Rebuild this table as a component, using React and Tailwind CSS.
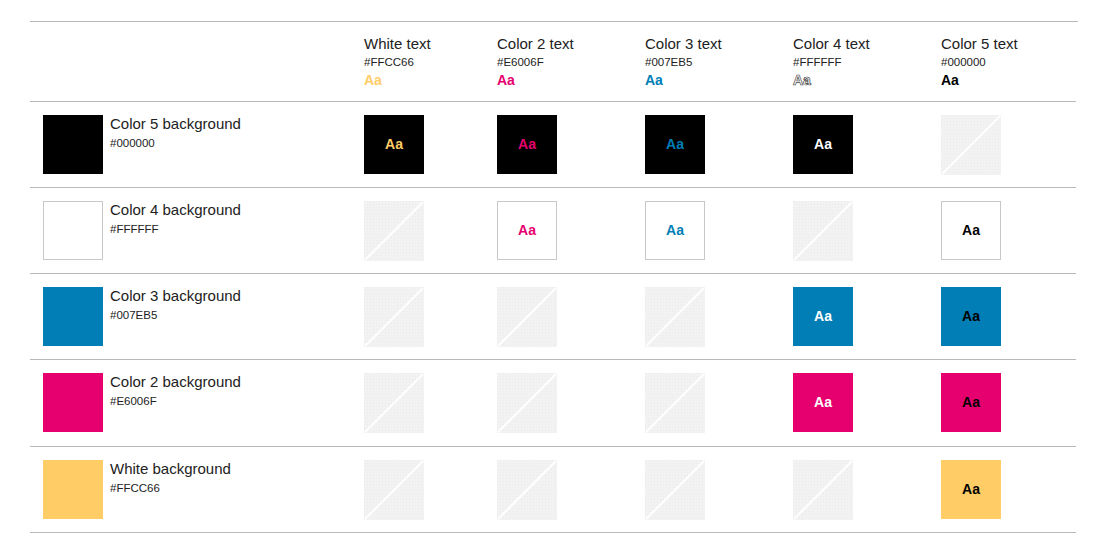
import React from "react";

const columns = [
    { name: "White text", hex: "#FFCC66", color: "text-[#FFCC66]" },
    { name: "Color 2 text", hex: "#E6006F", color: "text-[#E6006F]" },
    { name: "Color 3 text", hex: "#007EB5", color: "text-[#007EB5]" },
    { name: "Color 4 text", hex: "#FFFFFF", color: "text-white [-webkit-text-stroke:0.7px_#444]" },
    { name: "Color 5 text", hex: "#000000", color: "text-black" },
];

const cellText = [
    "text-[#FFCC66]",
    "text-[#E6006F]",
    "text-[#007EB5]",
    "text-white",
    "text-black",
];

// 0 = combination not allowed
const rows = [
    { name: "Color 5 background", hex: "#000000", bg: "bg-black", cells: [1, 1, 1, 1, 0] },
    { name: "Color 4 background", hex: "#FFFFFF", bg: "bg-white border border-[#c8c8c8]", cells: [0, 1, 1, 0, 1] },
    { name: "Color 3 background", hex: "#007EB5", bg: "bg-[#007EB5]", cells: [0, 0, 0, 1, 1] },
    { name: "Color 2 background", hex: "#E6006F", bg: "bg-[#E6006F]", cells: [0, 0, 0, 1, 1] },
    { name: "White background", hex: "#FFCC66", bg: "bg-[#FFCC66]", cells: [0, 0, 0, 0, 1] },
];

const Placeholder = () => (
    <svg width="60" height="60" viewBox="0 0 60 60" className="block">
        <defs>
            <pattern id="dots" width="3" height="3" patternUnits="userSpaceOnUse">
                <rect width="3" height="3" fill="#f2f2f2" />
                <rect width="1" height="1" fill="#ebebeb" />
            </pattern>
        </defs>
        <rect width="60" height="60" fill="url(#dots)" />
        <line x1="1" y1="59" x2="59" y2="1" stroke="#ffffff" strokeWidth="2" />
    </svg>
);

const App = () => {
    return (
        <div className="bg-white min-h-screen pt-[21px] px-[30px] text-[#222] font-['Liberation_Sans',Arial,sans-serif]">
            <div className="border-t border-[#b8b8b8] grid grid-cols-[334px_133px_148px_148px_148px_135px]">
                {/* Header */}
                <div className="h-[80px] border-b border-[#b8b8b8]" />
                {columns.map((c) => (
                    <div key={c.name} className="h-[80px] border-b border-[#b8b8b8] pt-[12px]">
                        <div className="text-[15px] leading-[20px]">{c.name}</div>
                        <div className="text-[11.5px] leading-[16px]">{c.hex}</div>
                        <div className={`text-[14px] leading-[16px] font-bold mt-[2px] ${c.color}`}>Aa</div>
                    </div>
                ))}

                {/* Rows */}
                {rows.map((r, ri) => (
                    <React.Fragment key={r.name}>
                        <div className={`${ri === 3 ? "h-[87px]" : "h-[86px]"} border-b border-[#b8b8b8] pt-[13px] pl-[13px] flex items-start gap-[7px]`}>
                            <div className={`w-[60px] h-[59px] ${r.bg}`} />
                            <div>
                                <div className="text-[15px] leading-[18px]">{r.name}</div>
                                <div className="text-[11.5px] leading-[16px] mt-[2px]">{r.hex}</div>
                            </div>
                        </div>
                        {r.cells.map((ok, i) => (
                            <div key={i} className={`${ri === 3 ? "h-[87px]" : "h-[86px]"} border-b border-[#b8b8b8] pt-[13px]`}>
                                {ok ? (
                                    <div className={`w-[60px] h-[59px] flex items-center justify-center ${r.bg}`}>
                                        <span className={`text-[14px] font-bold ${cellText[i]}`}>Aa</span>
                                    </div>
                                ) : (
                                    <Placeholder />
                                )}
                            </div>
                        ))}
                    </React.Fragment>
                ))}
            </div>
        </div>
    );
};

export default App;
